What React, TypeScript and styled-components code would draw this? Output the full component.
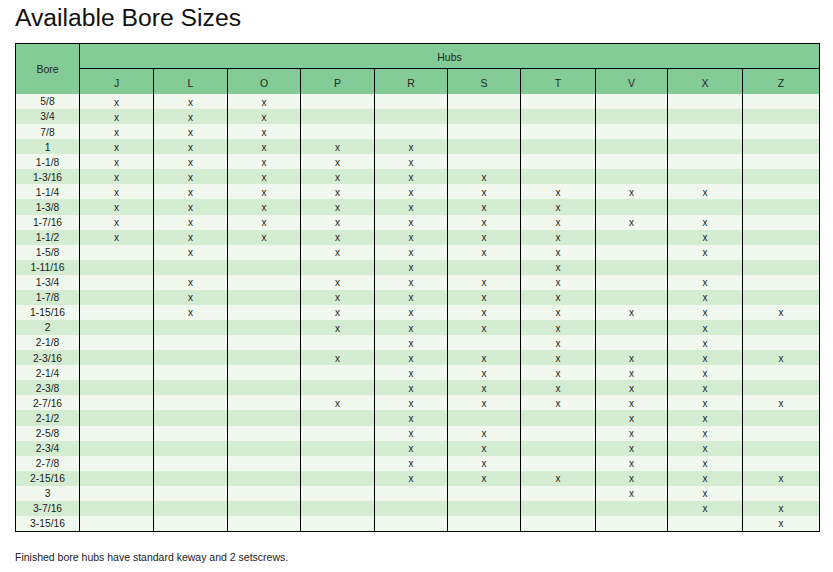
import React from "react";
import styled, { createGlobalStyle } from "styled-components";

const GlobalStyle = createGlobalStyle`
  html, body {
    margin: 0;
    padding: 0;
    background: #ffffff;
  }
  body {
    font-family: "Liberation Sans", Arial, sans-serif;
    color: #1a1a1a;
  }
  * { box-sizing: border-box; }
`;

const HUBS = ["J", "L", "O", "P", "R", "S", "T", "V", "X", "Z"];
const COL_WIDTHS = [63, 74, 74, 73, 74, 73, 73, 75, 72, 75, 77];

const ROWS: [string, string][] = [
  ["5/8", "JLO"],
  ["3/4", "JLO"],
  ["7/8", "JLO"],
  ["1", "JLOPR"],
  ["1-1/8", "JLOPR"],
  ["1-3/16", "JLOPRS"],
  ["1-1/4", "JLOPRSTVX"],
  ["1-3/8", "JLOPRST"],
  ["1-7/16", "JLOPRSTVX"],
  ["1-1/2", "JLOPRSTX"],
  ["1-5/8", "LPRSTX"],
  ["1-11/16", "RT"],
  ["1-3/4", "LPRSTX"],
  ["1-7/8", "LPRSTX"],
  ["1-15/16", "LPRSTVXZ"],
  ["2", "PRSTX"],
  ["2-1/8", "RTX"],
  ["2-3/16", "PRSTVXZ"],
  ["2-1/4", "RSTVX"],
  ["2-3/8", "RSTVX"],
  ["2-7/16", "PRSTVXZ"],
  ["2-1/2", "RVX"],
  ["2-5/8", "RSVX"],
  ["2-3/4", "RSVX"],
  ["2-7/8", "RSVX"],
  ["2-15/16", "RSTVXZ"],
  ["3", "VX"],
  ["3-7/16", "XZ"],
  ["3-15/16", "Z"],
];

const Page = styled.div`
  padding: 6px 0 0 15px;
  width: 833px;
`;

const Title = styled.h1`
  margin: 0;
  font-size: 24.7px;
  line-height: 24px;
  font-weight: 400;
  color: #111;
  letter-spacing: 0;
`;

const Grid = styled.div`
  margin-top: 13px;
  width: 805px;
  height: 489px;
  border: 1px solid #000;
  display: grid;
  grid-template-columns: ${COL_WIDTHS.map((w) => `${w}px`).join(" ")};
  grid-template-rows: 25px 25px repeat(${ROWS.length}, 1fr);
`;

const HeadCell = styled.div<{ $divider?: boolean; $underline?: boolean }>`
  background: #83cb97;
  display: flex;
  align-items: center;
  justify-content: center;
  font-size: 10.5px;
  color: #1f2a22;
  border-left: ${(p) => (p.$divider ? "1px solid #000" : "none")};
  border-bottom: ${(p) => (p.$underline ? "1px solid #000" : "none")};
`;

const BoreHead = styled(HeadCell)`
  grid-row: 1 / span 2;
  grid-column: 1;
  padding-bottom: 1px;
`;

const HubsHead = styled(HeadCell)`
  grid-row: 1;
  grid-column: 2 / span ${HUBS.length};
  padding-top: 2px;
`;

const LetterHead = styled(HeadCell)`
  grid-row: 2;
  padding-top: 2px;
`;

const Cell = styled.div<{ $alt: boolean; $divider?: boolean }>`
  background: ${(p) => (p.$alt ? "#d4edd2" : "#f1f9ee")};
  display: flex;
  align-items: center;
  justify-content: center;
  font-size: 10px;
  line-height: 1;
  color: #1a1a1a;
  border-left: ${(p) => (p.$divider ? "1px solid #000" : "none")};
`;

const BoreText = styled.span`
  font-size: 10.3px;
  color: #1a1a1a;
  transform: translateY(1px);
`;

const Mark = styled.span`
  font-size: 10px;
  color: #222;
  transform: translateY(1px);
`;

const Footnote = styled.p`
  margin: 19px 0 0 0;
  font-size: 10.5px;
  line-height: 12px;
  color: #1a1a1a;
`;

export default function App() {
  return (
    <>
      <GlobalStyle />
      <Page>
        <Title>Available Bore Sizes</Title>
        <Grid role="table">
          <BoreHead>Bore</BoreHead>
          <HubsHead $divider $underline>
            Hubs
          </HubsHead>
          {HUBS.map((h) => (
            <LetterHead key={h} $divider>
              {h}
            </LetterHead>
          ))}
          {ROWS.map(([bore, hubs], i) => (
            <React.Fragment key={bore}>
              <Cell $alt={i % 2 === 1}>
                <BoreText>{bore}</BoreText>
              </Cell>
              {HUBS.map((h) => (
                <Cell key={h} $alt={i % 2 === 1} $divider>
                  {hubs.includes(h) ? <Mark>x</Mark> : null}
                </Cell>
              ))}
            </React.Fragment>
          ))}
        </Grid>
        <Footnote>Finished bore hubs have standard keway and 2 setscrews.</Footnote>
      </Page>
    </>
  );
}
